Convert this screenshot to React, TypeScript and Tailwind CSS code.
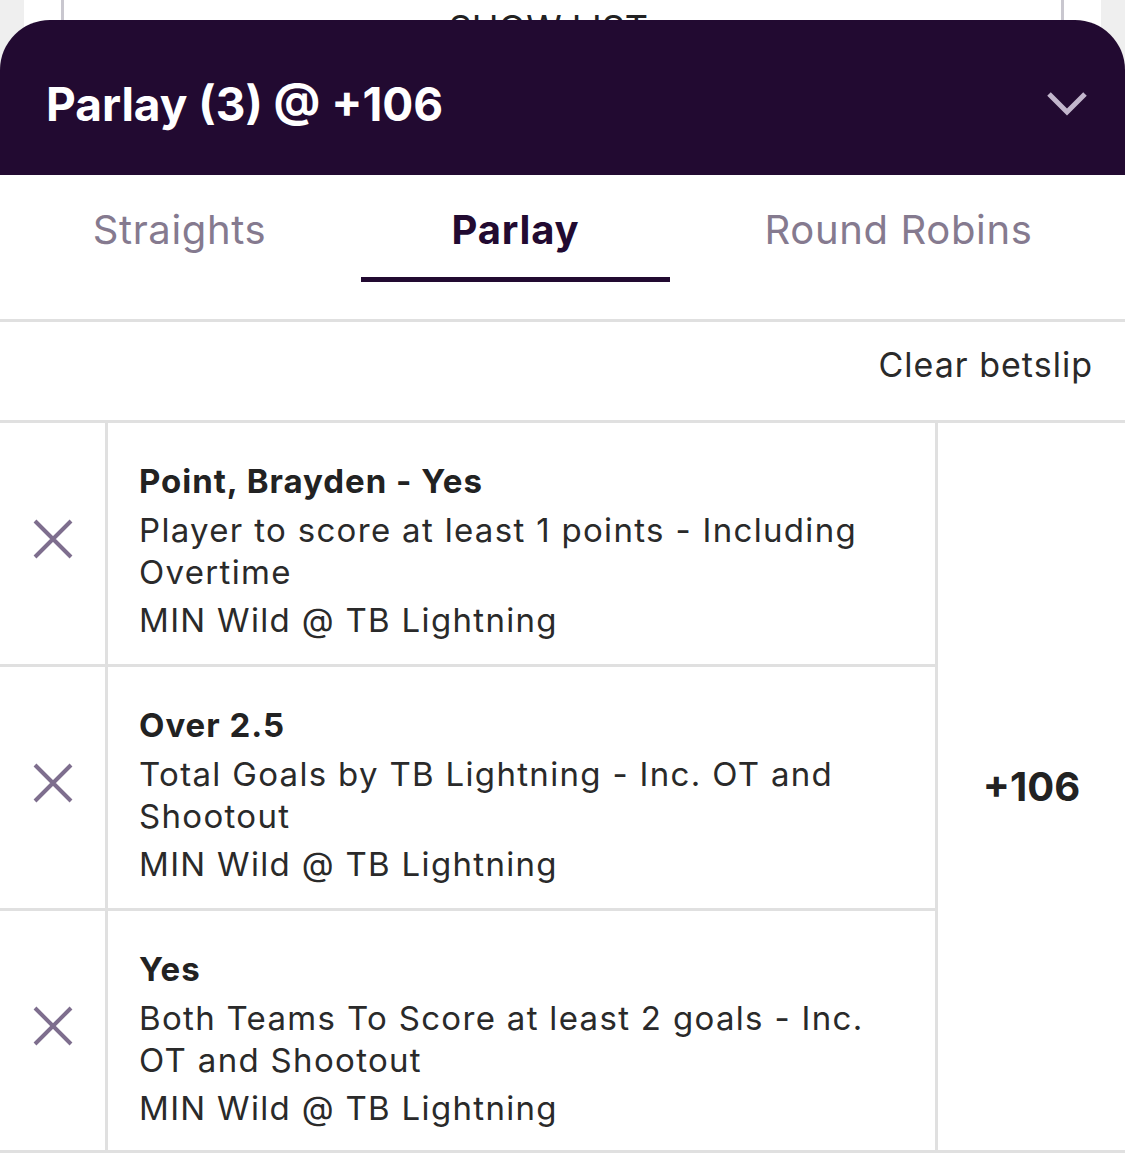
import React from 'react';

const font = { fontFamily: 'Inter, "Liberation Sans", sans-serif' };

type Leg = { title: string; desc: string; match: string };

const legs: Leg[] = [
  { title: 'Point, Brayden - Yes', desc: 'Player to score at least 1 points - Including Overtime', match: 'MIN Wild @ TB Lightning' },
  { title: 'Over 2.5', desc: 'Total Goals by TB Lightning - Inc. OT and Shootout', match: 'MIN Wild @ TB Lightning' },
  { title: 'Yes', desc: 'Both Teams To Score at least 2 goals - Inc. OT and Shootout', match: 'MIN Wild @ TB Lightning' },
];

function CloseIcon() {
  return (
    <svg width="40" height="40" viewBox="0 0 40 40" fill="none" stroke="#7e6e8e" strokeWidth="4">
      <path d="M2 2 L38 38 M38 2 L2 38" />
    </svg>
  );
}

function LegRow({ leg, last }: { leg: Leg; last: boolean }) {
  return (
    <div className={`flex ${last ? 'h-[239px]' : 'h-[244px] border-b-[3px] border-[#e0e0e0]'}`}>
      <div className="w-[108px] shrink-0 flex items-center justify-center pb-[10px] border-r-[3px] border-[#e0e0e0]">
        <CloseIcon />
      </div>
      <div className="flex-1 pl-[31px] pr-[60px] pt-[36px] text-[33px] tracking-[0.04em] text-[#2a2a2a]">
        <p className="font-bold leading-[44px] tracking-[0.03em] text-[#222]">{leg.title}</p>
        <p className="leading-[42px] mt-[6px]">{leg.desc}</p>
        <p className="leading-[42px] mt-[6px]">{leg.match}</p>
      </div>
    </div>
  );
}

export default function App() {
  return (
    <div className="w-[1125px] h-[1159px] bg-white overflow-hidden" style={font}>
      {/* page behind the sheet */}
      <div className="flex h-[70px] bg-[#efefef] px-[24px]">
        <div className="flex-1 bg-white px-[37px]">
          <div className="h-full border-x-[3px] border-[#c9c7cf] flex justify-center">
            <span className="text-[36px] leading-none pt-[10px] text-[#222]">SHOW LIST ▾</span>
          </div>
        </div>
      </div>

      {/* sheet header */}
      <header className="relative -mt-[50px] h-[155px] bg-[#220a31] rounded-t-[50px] flex items-center justify-between pl-[46px] pr-[38px]">
        <h1 className="text-white font-bold text-[46px] leading-none pt-[12px]">Parlay (3) @ +106</h1>
        <svg width="40" height="26" viewBox="0 0 40 26" fill="none" stroke="#c2b6cc" strokeWidth="5" className="mt-[12px]">
          <path d="M2 3 L20 21 L38 3" />
        </svg>
      </header>

      {/* tabs */}
      <nav className="flex h-[147px] border-b-[3px] border-[#e0e0e0] tracking-[0.04em]">
        <div className="w-[359px] flex flex-col items-center">
          <span className="mt-[30px] text-[40px] leading-[50px] text-[#857a8f]">Straights</span>
        </div>
        <div className="w-[309px] ml-[2px] flex flex-col">
          <span className="mt-[30px] text-[40px] leading-[50px] font-bold tracking-[0.02em] text-[#220a31] text-center">Parlay</span>
          <div className="mt-[22px] h-[5px] bg-[#220a31]" />
        </div>
        <div className="flex-1 ml-[2px] flex flex-col items-center">
          <span className="mt-[30px] text-[40px] leading-[50px] text-[#857a8f]">Round Robins</span>
        </div>
      </nav>

      <div className="h-[101px] border-b-[3px] border-[#e0e0e0] flex items-center justify-end pr-[32px] pb-[14px]">
        <button className="text-[34px] tracking-[0.03em] text-[#2a2a2a]">Clear betslip</button>
      </div>

      {/* legs */}
      <div className="flex border-b-[3px] border-[#e0e0e0]">
        <div className="w-[938px] border-r-[3px] border-[#e0e0e0]">
          {legs.map((leg, i) => (
            <LegRow key={i} leg={leg} last={i === legs.length - 1} />
          ))}
        </div>
        <div className="flex-1 flex items-center justify-center">
          <span className="text-[40px] font-bold text-[#222]">+106</span>
        </div>
      </div>
    </div>
  );
}
